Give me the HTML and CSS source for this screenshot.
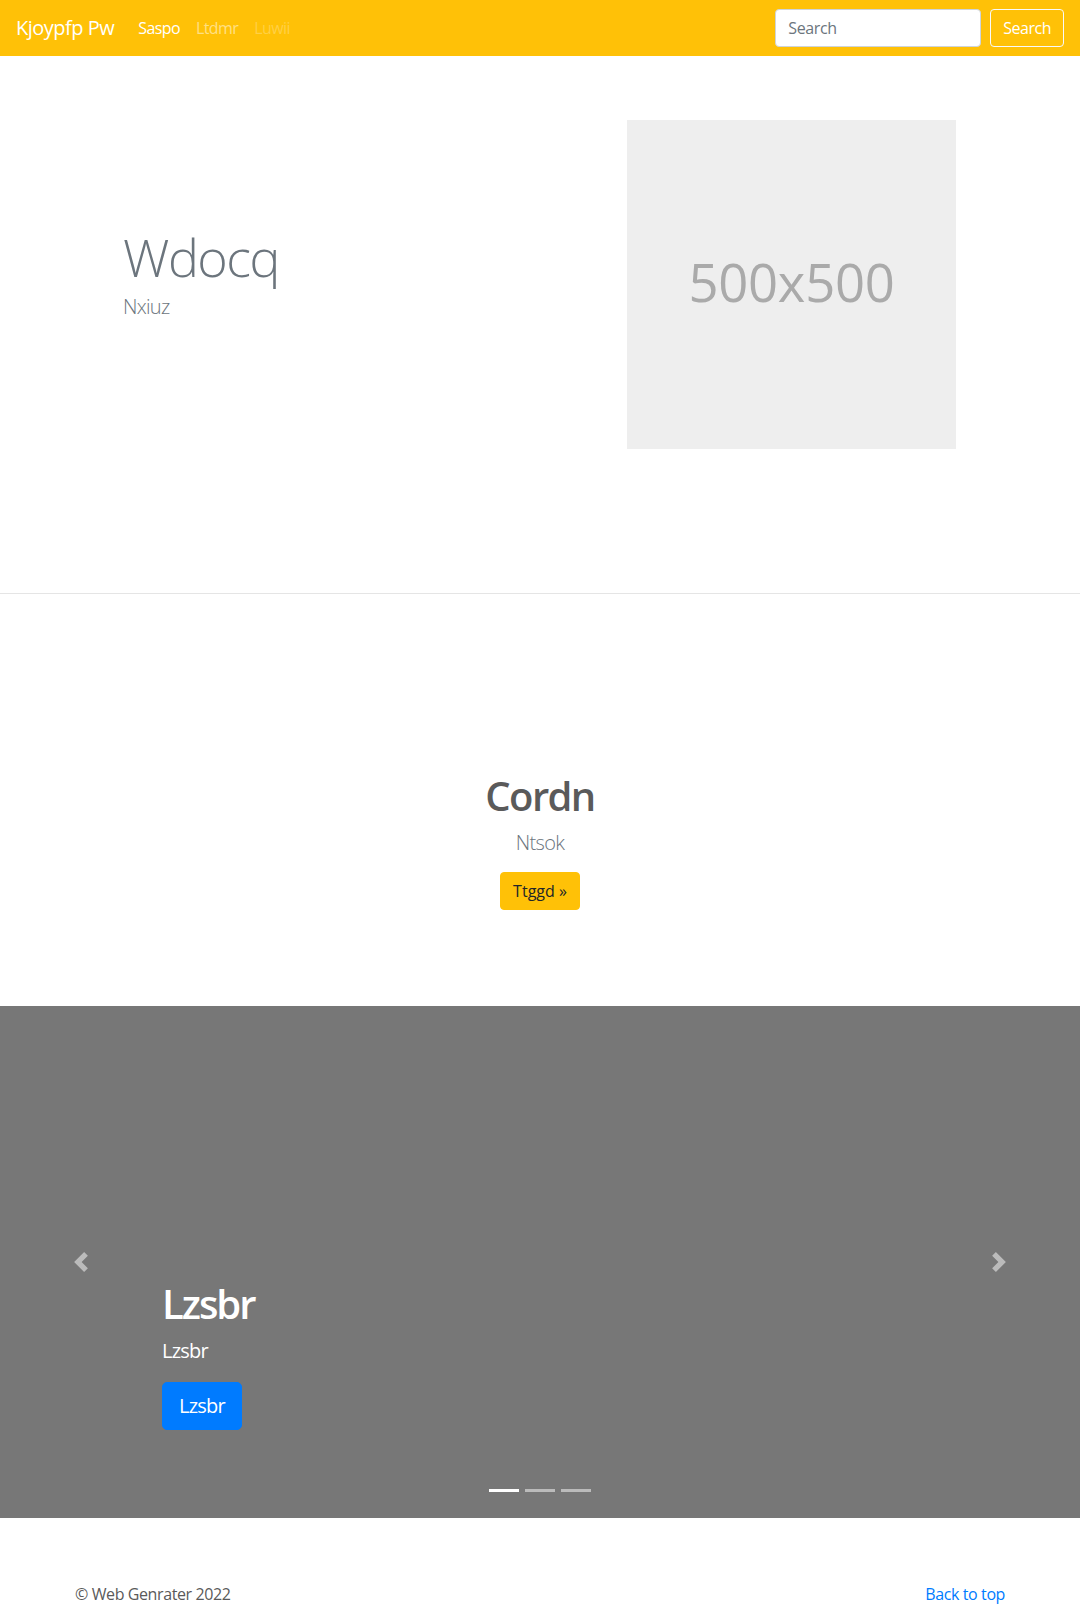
FILE: index.html
```html
<!DOCTYPE html>
<html lang="en">
<head>
<meta charset="utf-8">
<title>Kjoypfp Pw</title>
<link rel="stylesheet" href="styles.css">
</head>
<body>
<nav class="navbar">
  <div class="nav-left">
    <a class="brand" href="#">Kjoypfp Pw</a>
    <ul class="nav-links">
      <li><a class="nav-link active" href="#">Saspo</a></li>
      <li><a class="nav-link" href="#">Ltdmr</a></li>
      <li><a class="nav-link disabled" href="#">Luwii</a></li>
    </ul>
  </div>
  <form class="search-form">
    <input class="search-input" type="text" placeholder="Search">
    <button class="search-btn" type="button">Search</button>
  </form>
</nav>

<section class="hero">
  <div class="hero-inner">
    <div class="hero-text">
      <h1 class="display">Wdocq</h1>
      <p class="lead muted">Nxiuz</p>
    </div>
    <div class="hero-image">
      <svg class="placeholder" width="329" height="329" viewBox="0 0 500 500" role="img" aria-label="500x500">
        <rect width="500" height="500" fill="#eeeeee"/>
        <text x="250" y="277" text-anchor="middle" fill="#aaaaaa" font-family="Open Sans, sans-serif" font-size="80">500x500</text>
      </svg>
    </div>
  </div>
</section>

<section class="feature">
  <h1 class="feature-title">Cordn</h1>
  <p class="lead muted">Ntsok</p>
  <a class="btn btn-warning" href="#">Ttggd &raquo;</a>
</section>

<div class="carousel">
  <div class="carousel-item"></div>
  <div class="carousel-caption">
    <h1 class="caption-title">Lzsbr</h1>
    <p class="caption-text">Lzsbr</p>
    <p class="caption-action"><a class="btn btn-lg btn-primary" href="#">Lzsbr</a></p>
  </div>
  <a class="carousel-control prev" href="#" aria-label="Previous">
    <svg width="20" height="20" viewBox="0 0 8 8"><path fill="#fff" d="M5.25 0l-4 4 4 4 1.5-1.5L4.250 4l2.5-2.5L5.25 0z"/></svg>
  </a>
  <a class="carousel-control next" href="#" aria-label="Next">
    <svg width="20" height="20" viewBox="0 0 8 8"><path fill="#fff" d="M2.75 0l-1.5 1.5L3.75 4l-2.5 2.5L2.75 8l4-4-4-4z"/></svg>
  </a>
  <ol class="indicators">
    <li class="active"></li>
    <li></li>
    <li></li>
  </ol>
</div>

<footer class="footer">
  <p class="footer-top"><a href="#">Back to top</a></p>
  <p class="footer-copy">&copy; Web Genrater 2022</p>
</footer>
</body>
</html>
```

FILE: styles.css
```css
* { box-sizing: border-box; }

html, body {
  margin: 0;
  padding: 0;
}

body {
  font-family: "Open Sans", "Noto Sans", sans-serif;
  font-size: 16px;
  line-height: 1.5;
  letter-spacing: -0.4px;
  color: #5a5a5a;
  background: #fff;
  padding-bottom: 48px;
}

a { text-decoration: none; }

/* Navbar */
.navbar {
  display: flex;
  align-items: center;
  justify-content: space-between;
  height: 56px;
  padding: 8px 16px;
  background: #ffc107;
}

.nav-left {
  display: flex;
  align-items: center;
}

.brand {
  font-size: 20px;
  line-height: 30px;
  letter-spacing: -0.5px;
  padding: 5px 0;
  margin-right: 16px;
  color: #fff;
}

.nav-links {
  display: flex;
  list-style: none;
  margin: 0;
  padding: 0;
}

.nav-link {
  display: block;
  padding: 8px;
  letter-spacing: -0.6px;
  color: rgba(255, 255, 255, 0.5);
}

.nav-link.active { color: #fff; }
.nav-link.disabled { color: rgba(255, 255, 255, 0.25); }

.search-form {
  display: flex;
  align-items: center;
}

.search-input {
  width: 206px;
  height: 38px;
  padding: 6px 12px;
  font-family: inherit;
  font-size: 16px;
  letter-spacing: -0.4px;
  color: #495057;
  background: #fff;
  border: 1px solid #ced4da;
  border-radius: 4px;
  margin-right: 9px;
}

.search-input::placeholder { color: #6c757d; }

.search-btn {
  height: 38px;
  padding: 6px 12px;
  font-family: inherit;
  font-size: 16px;
  line-height: 24px;
  letter-spacing: -0.5px;
  color: #fff;
  background: transparent;
  border: 1px solid #f8f9fa;
  border-radius: 4px;
}

/* Hero */
.hero {
  padding: 64px 0 144px;
  border-bottom: 1px solid #e5e5e5;
}

.hero-inner {
  width: 960px;
  margin: 0 auto;
  display: grid;
  grid-template-columns: 567px 329px;
}

.hero-text {
  padding: 106px 0 0 63px;
}

.display {
  margin: 0;
  font-size: 52px;
  font-weight: 300;
  line-height: 1.2;
  letter-spacing: -1.5px;
  color: #6c757d;
}

.lead {
  font-size: 20px;
  font-weight: 300;
  line-height: 30px;
  letter-spacing: -0.7px;
}

.muted { color: #6c757d; }

.hero-text .lead { margin: 4px 0 0; }

.placeholder { display: block; }

/* Feature */
.feature {
  padding: 178px 0 96px;
  text-align: center;
}

.feature-title {
  margin: 0 0 8px;
  font-size: 40px;
  font-weight: 600;
  line-height: 48px;
  letter-spacing: -1.6px;
  color: #5a5a5a;
}

.feature .lead { margin: 0 0 14px; }

.btn {
  display: inline-block;
  padding: 6px 12px;
  font-size: 16px;
  line-height: 24px;
  border: 1px solid transparent;
  border-radius: 4px;
}

.btn-warning {
  color: #212529;
  background: #ffc107;
  border-color: #ffc107;
  letter-spacing: 0;
}

.btn-lg {
  padding: 8px 16px;
  font-size: 20px;
  line-height: 30px;
  letter-spacing: -0.8px;
  border-radius: 5px;
}

.btn-primary {
  color: #fff;
  background: #007bff;
  border-color: #007bff;
}

/* Carousel */
.carousel {
  position: relative;
  height: 512px;
  margin-bottom: 64px;
  background: #777;
  overflow: hidden;
}

.carousel-item {
  height: 100%;
  background: #777;
}

.carousel-caption {
  position: absolute;
  left: 15%;
  right: 15%;
  bottom: 48px;
  padding: 20px 0;
  color: #fff;
  text-align: left;
  z-index: 10;
}

.caption-title {
  margin: 0 0 8px;
  font-size: 40px;
  font-weight: 600;
  line-height: 48px;
  letter-spacing: -2px;
}

.caption-text {
  margin: 0 0 16px;
  font-size: 20px;
  line-height: 30px;
  letter-spacing: -0.8px;
}

.caption-action {
  margin: 0 0 20px;
  line-height: 0;
}

.caption-action .btn { vertical-align: top; }

.carousel-control {
  position: absolute;
  top: 0;
  bottom: 0;
  width: 15%;
  display: flex;
  align-items: center;
  justify-content: center;
  opacity: 0.5;
  z-index: 5;
}

.carousel-control.prev { left: 0; }
.carousel-control.next { right: 0; }

.indicators {
  position: absolute;
  left: 0;
  right: 0;
  bottom: 0;
  margin: 0 0 16px;
  padding: 0;
  list-style: none;
  display: flex;
  justify-content: center;
  z-index: 15;
}

.indicators li {
  width: 30px;
  height: 23px;
  margin: 0 3px;
  border-top: 10px solid transparent;
  border-bottom: 10px solid transparent;
  background: #fff;
  background-clip: padding-box;
  opacity: 0.5;
}

.indicators li.active { opacity: 1; }

/* Footer */
.footer {
  width: 960px;
  margin: 0 auto;
  padding: 0 15px;
}

.footer p { margin: 0 0 16px; }

.footer-top { float: right; }

.footer-top a { color: #007bff; }

.footer-copy { color: #5a5a5a; }
```
